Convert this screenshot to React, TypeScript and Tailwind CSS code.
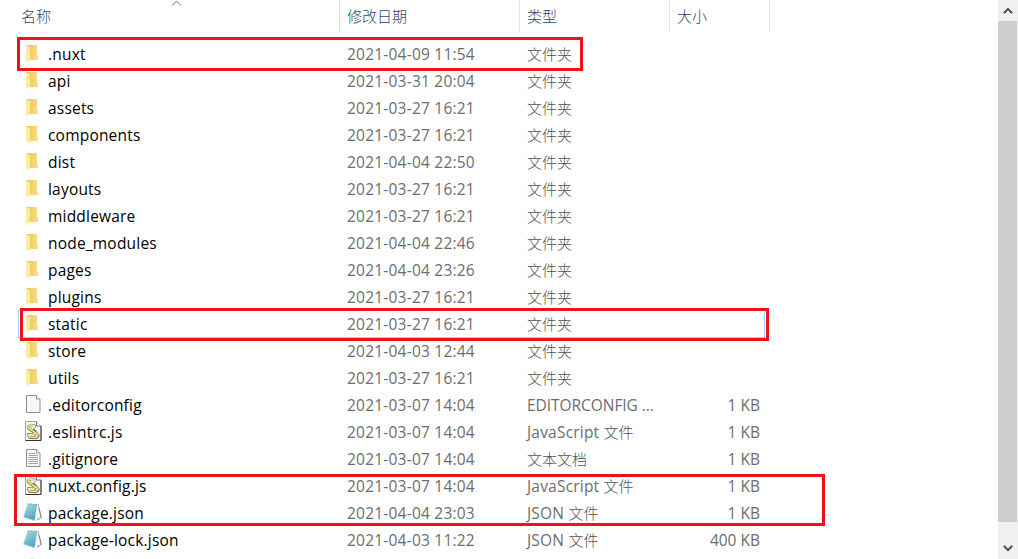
import React from 'react';

type Kind = 'folder' | 'blank' | 'script' | 'text' | 'json';

interface FileEntry {
  name: string;
  date: string;
  type?: string;
  typeZh?: string;
  size?: string;
  kind: Kind;
}

const folder = (name: string, date: string): FileEntry => ({ name, date, typeZh: '文件夹', kind: 'folder' });

const files: FileEntry[] = [
  folder('.nuxt', '2021-04-09 11:54'),
  folder('api', '2021-03-31 20:04'),
  folder('assets', '2021-03-27 16:21'),
  folder('components', '2021-03-27 16:21'),
  folder('dist', '2021-04-04 22:50'),
  folder('layouts', '2021-03-27 16:21'),
  folder('middleware', '2021-03-27 16:21'),
  folder('node_modules', '2021-04-04 22:46'),
  folder('pages', '2021-04-04 23:26'),
  folder('plugins', '2021-03-27 16:21'),
  folder('static', '2021-03-27 16:21'),
  folder('store', '2021-04-03 12:44'),
  folder('utils', '2021-03-27 16:21'),
  { name: '.editorconfig', date: '2021-03-07 14:04', type: 'EDITORCONFIG ...', size: '1 KB', kind: 'blank' },
  { name: '.eslintrc.js', date: '2021-03-07 14:04', type: 'JavaScript ', typeZh: '文件', size: '1 KB', kind: 'script' },
  { name: '.gitignore', date: '2021-03-07 14:04', typeZh: '文本文档', size: '1 KB', kind: 'text' },
  { name: 'nuxt.config.js', date: '2021-03-07 14:04', type: 'JavaScript ', typeZh: '文件', size: '1 KB', kind: 'script' },
  { name: 'package.json', date: '2021-04-04 23:03', type: 'JSON ', typeZh: '文件', size: '1 KB', kind: 'json' },
  { name: 'package-lock.json', date: '2021-04-03 11:22', type: 'JSON ', typeZh: '文件', size: '400 KB', kind: 'json' },
];

const FolderIcon = () => (
  <svg width="20" height="20" viewBox="0 0 20 20">
    <defs>
      <linearGradient id="folderBack" x1="0" x2="1" y1="0" y2="0">
        <stop offset="0.2" stopColor="#ecc766" />
        <stop offset="1" stopColor="#fcdd86" />
      </linearGradient>
    </defs>
    <path d="M3 1h11v10.5l1 .8V16H3z" fill="url(#folderBack)" />
    <path d="M3 1l4 2.2v12.3l-1 2.8-3-1.8z" fill="#ffe9a6" />
  </svg>
);

const Page = ({ children }: { children?: React.ReactNode }) => (
  <svg width="20" height="20" viewBox="0 0 20 20">
    <path d="M3.5.5h10l3.5 3.5v13.5H3.5z" fill="#f6f7f7" stroke="#909090" />
    <path d="M13.5.5V4H17" fill="#ffffff" stroke="#909090" />
    {children}
  </svg>
);

const TextIcon = () => (
  <Page>
    <path d="M5.5 4.5h7M5.5 6.5h9.5M5.5 8.5h9.5M5.5 10.5h9.5M5.5 12.5h9.5M5.5 14.5h9.5" stroke="#a3a3a3" />
  </Page>
);

const ScriptIcon = () => (
  <svg width="20" height="20" viewBox="0 0 20 20" className="overflow-visible">
    <path d="M2.5-.5h11l4.5 4.5v14.5H2.5z" fill="#fcfcfc" stroke="#a0a0a0" />
    <path d="M18 4v14.5H2.5" fill="none" stroke="#333333" />
    <path d="M13.5-.5V4H18" fill="#ffffff" stroke="#777777" />
    {/* scroll: grey shadow, yellow ribbon, highlights */}
    <path d="M13 4.4L8 3.2 5.2 4.5l.6 2 6.4 4.3-1.2 2.2-5.8-.5 1.6 3 6.4.4 2-2.6-2-2.5-3.4-3.4" fill="none" stroke="#77756a" strokeWidth="2.9" strokeLinejoin="round" />
    <path d="M12.7 4.2L8 3 5.2 4.3l.6 2 6.4 4.3-1.4 2.4-5.6-.5 1.6 2.6 6.2.4 1.8-2.4-2-2.5" fill="none" stroke="#f0e678" strokeWidth="1.7" strokeLinejoin="round" />
    <path d="M7.5 3.8l4.5.9M6 13l4.5.4" stroke="#fffbd8" />
  </svg>
);

const JsonIcon = () => (
  <svg width="20" height="20" viewBox="0 0 20 20">
    <defs>
      <linearGradient id="noteCover" x1=".2" x2=".7" y1="0" y2="1">
        <stop offset="0" stopColor="#a5d8e4" />
        <stop offset="1" stopColor="#4b9fba" />
      </linearGradient>
    </defs>
    <path d="M15.5 1.2l3.4 13.3-5 3.2z" fill="#85806f" />
    <path d="M14.5 1.2l3.2 13.4-5.6 3.2z" fill="#f1f3f4" />
    <path d="M4.5.9l9.8.7-2.8 16.2L.4 14.3z" fill="url(#noteCover)" />
    <path d="M.4 14.3l11.1 3.5.4-1.6" fill="none" stroke="#b9d8df" strokeWidth=".8" />
    <path d="M4.5.9l11 .7" stroke="#8b9699" strokeWidth="1.2" strokeDasharray="1 .7" />
  </svg>
);

const icons: Record<Kind, React.FC> = {
  folder: FolderIcon,
  blank: Page,
  script: ScriptIcon,
  text: TextIcon,
  json: JsonIcon,
};

const FileRow = ({ file }: { file: FileEntry }) => {
  const Icon = icons[file.kind];
  return (
    <div className="flex h-[27px] items-start whitespace-pre text-[#6d6d6d]">
      <div className="flex h-full w-[324px] text-black">
        <div className="mt-[3px] mr-[5px] w-5 shrink-0">
          <Icon />
        </div>
        <span className="tracking-[0.2px]">{file.name}</span>
      </div>
      <div className="w-[180px] tracking-[0.22px]">{file.date}</div>
      <div className="flex w-[150px]">
        {file.type && <span className={file.typeZh ? 'tracking-[0.2px]' : 'tracking-[-0.05px]'}>{file.type}</span>}
        {file.typeZh && <span className="text-[15px] font-light text-[#505050]">{file.typeZh}</span>}
      </div>
      <div className="w-[83px] text-right">{file.size}</div>
    </div>
  );
};

const Chevron = ({ up }: { up?: boolean }) => (
  <svg width="10" height="8" viewBox="0 0 10 8">
    <path d={up ? 'M.8 6.2L5 2l4.2 4.2' : 'M.8 1.8L5 6l4.2-4.2'} fill="none" stroke="#555555" strokeWidth="2" />
  </svg>
);

export default function App() {
  return (
    <div className="relative flex h-[559px] w-[1018px] overflow-hidden bg-white font-['Open_Sans','Noto_Sans_CJK_SC',sans-serif] text-[15.5px] leading-[26px]">
      <div className="flex-1">
        <div className="flex h-8 text-[15px] leading-[27px] font-light text-[#2f4766]">
          <div className="w-[340px] border-r border-[#e5e5e5] pt-[3px] pl-[21px]">名称</div>
          <div className="w-[180px] border-r border-[#e5e5e5] pt-[3px] pl-[7px]">修改日期</div>
          <div className="w-[150px] border-r border-[#e5e5e5] pt-[3px] pl-[7px]">类型</div>
          <div className="w-[100px] border-r border-[#e5e5e5] pt-[3px] pl-[7px]">大小</div>
        </div>
        <div className="mt-[9px] pl-[23px]">
          {files.map((file) => (
            <FileRow key={file.name} file={file} />
          ))}
          {/* next row, cut off by the window edge */}
          <div className="mt-[3px] ml-[5px] h-2 w-2 rounded-full bg-[#f1f1f1]" />
        </div>
      </div>

      <div className="flex w-5 flex-col bg-[#f0f0f0]">
        <div className="flex h-[21px] items-center justify-center pr-px">
          <Chevron up />
        </div>
        <div className="h-[501px] w-[19px] bg-[#cdcdcd]" />
        <div className="flex flex-1 items-center justify-center pt-[15px] pr-px">
          <Chevron />
        </div>
      </div>

      {/* sort arrow */}
      <svg className="absolute top-0 left-[171px]" width="11" height="7" viewBox="0 0 11 7">
        <path d="M1 5.5L5.5 1 10 5.5" fill="none" stroke="#6a6a6a" />
      </svg>

      {/* focused row and marker frames */}
      <div className="absolute top-[310px] left-[18px] h-[28px] w-[747px] border border-[#99d1ff]" />
      <div className="absolute top-[37px] left-[17px] h-[34px] w-[566px] border-3 border-[#ee121b]" />
      <div className="absolute top-[308px] left-[20px] h-[33px] w-[749px] border-3 border-[#ee121b]" />
      <div className="absolute top-[474px] left-[14px] h-[52px] w-[811px] border-3 border-[#ee121b]" />
    </div>
  );
}
